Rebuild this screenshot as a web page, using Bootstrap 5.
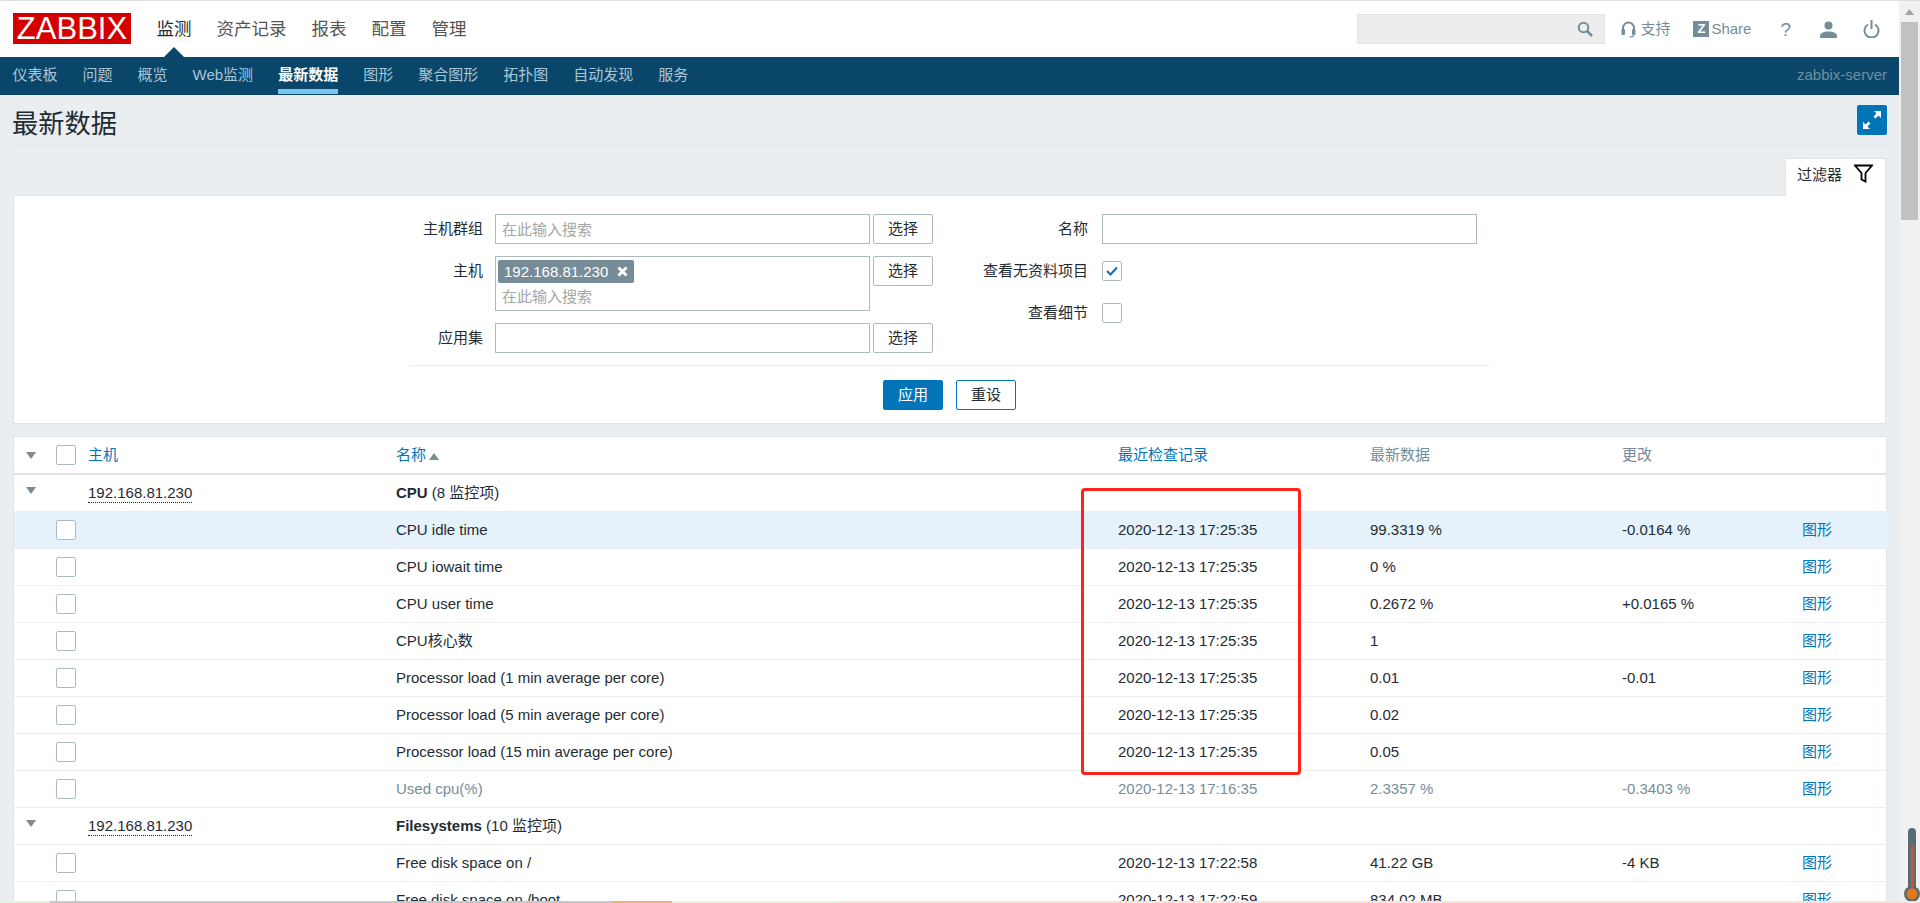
<!DOCTYPE html>
<html lang="zh-CN">
<head>
  <meta charset="UTF-8" />
  <title>最新数据</title>
  <link href="https://cdn.jsdelivr.net/npm/bootstrap@5.3.0/dist/css/bootstrap.min.css" rel="stylesheet"/>
  <style>
    html, body { height: 903px; overflow: hidden; }
    body { font-family: "Liberation Sans", "Noto Sans CJK SC", sans-serif; font-size: 15px; color: #1f2c33; background: #ebeef0; }
    a { text-decoration: none; }
    .zb-shell { height: 903px; overflow: hidden; border-top: 1px solid #dcdfe3; }
    .zb-main { width: 1899px; flex: none; overflow: hidden; background: #ebeef0; }
    .zb-scroll { width: 21px; flex: none; background: #f1f1f1; padding: 0 2px; }
    .zb-scroll-up { height: 21px; color: #a3a3a3; }
    .zb-scroll-thumb { height: 198px; background: #c1c1c1; }

    .zb-top { height: 56px; background: #fff; padding: 0 19px 0 13px; }
    .zb-logo { width: 118px; height: 31px; margin-top: -1px; background: #d40000; color: #fff; font-size: 31px; line-height: 31px; text-align: center; }
    .zb-menu { margin-left: 13px; }
    .zb-menu a { padding: 0 12.5px; font-size: 17.5px; color: #555; position: relative; line-height: 56px; display: block; }
    .zb-menu a.zb-on { color: #1f2c33; }
    .zb-menu a.zb-on::after { content: ""; position: absolute; left: 50%; bottom: 0; margin-left: -10px; border: solid transparent; border-width: 0 10px 10px; border-bottom-color: #0a466a; }
    .zb-search { width: 248px; height: 30px; background: #ededed; border: 1px solid #e3e3e3; margin-right: 16px; padding-right: 11px; }
    .zb-tool { color: #768d99; font-size: 15px; }
    .zb-tool svg { display: block; }
    .zb-zbox { width: 16px; height: 16px; background: #768d99; color: #fff; font-weight: 700; font-size: 13px; line-height: 16px; text-align: center; }

    .zb-sub { height: 38px; background: #0a466a; padding-right: 12px; }
    .zb-sub a { display: block; margin-left: 12.5px; margin-right: 12.5px; color: #a9c6d6; height: 38px; line-height: 36px; }
    .zb-sub a:first-child { margin-left: 12.5px; }
    .zb-sub a.zb-on { color: #fff; font-weight: 700; border-bottom: 5px solid #7cc4f0; margin-bottom: 0; height: 37px; }
    .zb-server { color: #6f8f9f; }

    .zb-head { height: 51px; margin: 0 12px 0 13px; border-bottom: 1px solid #dfe4e7; }
    .zb-title { font-size: 26.25px; line-height: 1; color: #1f2c33; margin: 0; font-weight: 400; padding-top: 8px; margin-left: -1px; }
    .zb-expand { width: 30px; height: 30px; background: #0275b8; border-radius: 2px; margin-top: 0; }

    .zb-tabwrap { margin: 12px 13px 0 13px; height: 37px; }
    .zb-tab { width: 101px; height: 38px; background: #fff; border: 1px solid #dfe4e7; border-bottom: 0; border-radius: 2px 2px 0 0; padding: 0 12px 0 11px; position: relative; z-index: 1; }
    .zb-tab span { margin-top: -5px; }
    .zb-filter { margin: 0 13px; height: 229px; background: #fff; border: 1px solid #dfe4e7; }
    .zb-form { width: 1079px; padding-top: 18px; }
    .zb-fields { padding-right: 12px; height: 152px; border-bottom: 1px solid #ebeef0; }
    .zb-lab { text-align: right; }
    .zb-grid-l { display: grid; grid-template-columns: 73px 375px 60px; column-gap: 12px; row-gap: 12px; align-items: start; align-content: start; }
    .zb-grid-l .zb-btn { margin-left: -9px; }
    .zb-grid-l .zb-lab { line-height: 30px; }
    .zb-grid-r { display: grid; grid-template-columns: 130px 375px; column-gap: 14px; row-gap: 12px; grid-auto-rows: 30px; align-items: center; align-content: start; }
    .zb-input.form-control { height: 30px; padding: 0 6px; border: 1px solid #acbbc2; border-radius: 0; font-size: 15px; color: #1f2c33; box-shadow: none; }
    .zb-input::placeholder { color: #a6a6a6; }
    .zb-multi { height: 55px; border: 1px solid #acbbc2; padding: 3px 2px; }
    .zb-chip { width: 136px; height: 23px; background: #768d99; color: #fff; border-radius: 2px; padding: 0 6px; line-height: 22px; }
    .zb-ph { color: #a6a6a6; padding-left: 4px; line-height: 24px; margin-top: 2px; }
    .zb-btn.btn { width: 60px; height: 30px; padding: 0; font-size: 15px; border: 1px solid #acbbc2; border-radius: 2px; background: #fff; color: #1f2c33; }
    .zb-act { padding-top: 14px; gap: 13px; }
    .zb-btn-apply.btn { background: #0275b8; border-color: #0275b8; color: #fff; margin: 0; }
    .zb-btn-reset.btn { border-color: #0275b8; color: #1f2c33; margin: 0; }
    .zb-cb { display: block; width: 20px; height: 20px; background: #fff; border: 1px solid #acbbc2; border-radius: 2px; }

    .zb-tablewrap { margin: 12px 12px 0 13px; background: #fff; border: solid #dfe4e7; border-width: 1px 1px 0; }
    .zb-table.table { table-layout: fixed; width: 1873px; margin: 0; --bs-table-color: #1f2c33; --bs-table-bg: transparent; font-size: 15px; }
    .zb-table th, .zb-table td { height: 37px; padding: 1px 8px 0; vertical-align: middle; border-bottom: 1px solid #ebeef0; font-weight: 400; white-space: nowrap; overflow: hidden; box-shadow: none; }
    .zb-table thead th { height: 37px; padding-top: 0; border-bottom: 2px solid #dfe4e7; color: #768d99; }
    .zb-table td .zb-cb { margin-top: -1px; }
    .zb-table th a, .zb-link { color: #0275b8; }
    .zb-host { border-bottom: 1px dotted #1f2c33; display: inline-block; line-height: 18px; }
    .zb-arrow { display: block; width: 0; height: 0; margin-left: 4px; border: solid transparent; border-width: 7px 5px 0; border-top-color: #768d99; }
    .zb-group .zb-arrow { margin-top: -5px; }
    .zb-sort { display: inline-block; width: 0; height: 0; margin-left: 3px; border: solid transparent; border-width: 0 5px 7px; border-bottom-color: #768d99; }
    .zb-hover td { background: #e5f2fb; }
    .zb-muted td { color: #768d99; }
    .zb-muted td a { color: #0275b8; }

    .zb-redbox { position: absolute; left: 1081px; top: 487px; width: 220px; height: 287px; border: 3px solid #fe2418; border-radius: 4px; pointer-events: none; }
    .zb-thermo { position: absolute; left: 1904px; top: 827px; }
    .zb-strip { position: absolute; left: 0; right: 0; bottom: 0; height: 2px; background: linear-gradient(90deg, #e3f3da 0 2.6%, #c8c8c8 2.6% 31.9%, #f2b06c 31.9% 35%, #e8f3e2 35% 43.7%, #f3e4dc 43.7% 100%); }
  </style>
</head>
<body>
<div class="zb-shell d-flex position-relative">
  <div class="zb-main">
    <!-- top menu -->
    <div class="zb-top d-flex align-items-center">
      <div class="zb-logo">ZABBIX</div>
      <nav class="zb-menu d-flex">
        <a class="zb-on" href="#">监测</a>
        <a href="#">资产记录</a>
        <a href="#">报表</a>
        <a href="#">配置</a>
        <a href="#">管理</a>
      </nav>
      <div class="ms-auto zb-search d-flex align-items-center justify-content-end">
        <svg width="16" height="16" viewBox="0 0 16 16" fill="none" stroke="#768d99"><circle cx="6.5" cy="6.5" r="4.8" stroke-width="2"/><path d="M10 10l5 5" stroke-width="2.6"/></svg>
      </div>
      <div class="zb-tool d-flex align-items-center" style="gap:4px">
        <svg width="15" height="17" viewBox="0 0 15 17" fill="none"><path d="M2 10V7a5.5 5.5 0 0 1 11 0v3" stroke="#768d99" stroke-width="2"/><rect x="0.5" y="8" width="3.5" height="6" rx="1.2" fill="#768d99"/><rect x="11" y="8" width="3.5" height="6" rx="1.2" fill="#768d99"/><path d="M12.5 14c0 1.5-2 2-4 2" stroke="#768d99" stroke-width="1.2"/></svg>
        <span>支持</span>
      </div>
      <div class="zb-tool d-flex align-items-center" style="gap:2px;margin-left:23px">
        <span class="zb-zbox">Z</span><span>Share</span>
      </div>
      <div class="zb-tool" style="margin-left:29px;font-size:19px;line-height:1">?</div>
      <div class="zb-tool" style="margin-left:29px">
        <svg width="17" height="17" viewBox="0 0 17 17" fill="#768d99"><circle cx="8.5" cy="4.5" r="4"/><path d="M0 17v-2c0-3 3.500-4.500 8.500-4.500S17 12 17 15v2z"/></svg>
      </div>
      <div class="zb-tool" style="margin-left:26px">
        <svg width="17" height="18" viewBox="0 0 17 18" fill="none" stroke="#768d99" stroke-width="2"><path d="M5 4.500a7 7 0 1 0 7 0"/><path d="M8.500 0v9"/></svg>
      </div>
    </div>

    <!-- sub menu -->
    <div class="zb-sub d-flex">
      <a href="#">仪表板</a>
      <a href="#">问题</a>
      <a href="#">概览</a>
      <a href="#">Web监测</a>
      <a class="zb-on" href="#">最新数据</a>
      <a href="#">图形</a>
      <a href="#">聚合图形</a>
      <a href="#">拓扑图</a>
      <a href="#">自动发现</a>
      <a href="#">服务</a>
      <span class="zb-server ms-auto" style="line-height:36px">zabbix-server</span>
    </div>

    <!-- page title -->
    <div class="zb-head d-flex justify-content-between align-items-center">
      <h1 class="zb-title">最新数据</h1>
      <div class="zb-expand d-flex align-items-center justify-content-center">
        <svg width="20" height="20" viewBox="0 0 20 20" fill="#fff"><path d="M12 1h7v7l-2.500-2.500-3 3-2-2 3-3zM8 19H1v-7l2.500 2.500 3-3 2 2-3 3z"/></svg>
      </div>
    </div>

    <!-- filter -->
    <div class="zb-tabwrap d-flex justify-content-end">
      <div class="zb-tab d-flex justify-content-between align-items-center">
        <span>过滤器</span>
        <svg width="19" height="19" viewBox="0 0 19 19" fill="none" stroke="#000" stroke-width="1.800" style="margin-top:-9px"><path d="M1 1.500h17l-6.500 7.500v8.500l-4-2V9z"/></svg>
      </div>
    </div>
    <div class="zb-filter">
      <div class="zb-form mx-auto">
        <div class="zb-fields d-flex justify-content-between">
          <div class="zb-grid-l">
            <div class="zb-lab">主机群组</div>
            <input class="form-control zb-input" placeholder="在此输入搜索">
            <button type="button" class="btn zb-btn">选择</button>
            <div class="zb-lab">主机</div>
            <div class="zb-multi">
              <div class="zb-chip d-flex justify-content-between align-items-center">
                <span>192.168.81.230</span>
                <svg width="11" height="11" viewBox="0 0 11 11" stroke="#fff" stroke-width="3"><path d="M1.500 1.500l8 8M9.500 1.500l-8 8"/></svg>
              </div>
              <div class="zb-ph">在此输入搜索</div>
            </div>
            <button type="button" class="btn zb-btn">选择</button>
            <div class="zb-lab">应用集</div>
            <input class="form-control zb-input">
            <button type="button" class="btn zb-btn">选择</button>
          </div>
          <div class="zb-grid-r">
            <div class="zb-lab">名称</div>
            <input class="form-control zb-input">
            <div class="zb-lab">查看无资料项目</div>
            <span class="zb-cb">
              <svg class="d-block" width="18" height="18" viewBox="0 0 18 18" fill="none" stroke="#0275b8" stroke-width="2"><path d="M4 9l3.500 3.500L14 5.500"/></svg>
            </span>
            <div class="zb-lab">查看细节</div>
            <span class="zb-cb"></span>
          </div>
        </div>
        <div class="zb-act d-flex justify-content-center">
          <button type="button" class="btn zb-btn zb-btn-apply">应用</button>
          <button type="button" class="btn zb-btn zb-btn-reset">重设</button>
        </div>
      </div>
    </div>

    <!-- latest data table -->
    <div class="zb-tablewrap">
      <table class="table zb-table">
        <colgroup>
          <col style="width:34px"><col style="width:32px"><col style="width:308px"><col style="width:722px"><col style="width:252px"><col style="width:252px"><col style="width:180px"><col style="width:93px">
        </colgroup>
        <thead>
          <tr>
            <th><span class="zb-arrow"></span></th>
            <th><span class="zb-cb"></span></th>
            <th><a href="#">主机</a></th>
            <th><a href="#">名称</a><span class="zb-sort"></span></th>
            <th><a href="#">最近检查记录</a></th>
            <th>最新数据</th>
            <th>更改</th>
            <th></th>
          </tr>
        </thead>
        <tbody>
          <tr class="zb-group">
            <td><span class="zb-arrow"></span></td><td></td>
            <td><span class="zb-host">192.168.81.230</span></td>
            <td><b>CPU</b> (8 监控项)</td><td></td><td></td><td></td><td></td>
          </tr>
          <tr class="zb-hover">
            <td></td><td><span class="zb-cb"></span></td><td></td>
            <td>CPU idle time</td><td>2020-12-13 17:25:35</td><td>99.3319 %</td><td>-0.0164 %</td><td><a class="zb-link" href="#">图形</a></td>
          </tr>
          <tr>
            <td></td><td><span class="zb-cb"></span></td><td></td>
            <td>CPU iowait time</td><td>2020-12-13 17:25:35</td><td>0 %</td><td></td><td><a class="zb-link" href="#">图形</a></td>
          </tr>
          <tr>
            <td></td><td><span class="zb-cb"></span></td><td></td>
            <td>CPU user time</td><td>2020-12-13 17:25:35</td><td>0.2672 %</td><td>+0.0165 %</td><td><a class="zb-link" href="#">图形</a></td>
          </tr>
          <tr>
            <td></td><td><span class="zb-cb"></span></td><td></td>
            <td>CPU核心数</td><td>2020-12-13 17:25:35</td><td>1</td><td></td><td><a class="zb-link" href="#">图形</a></td>
          </tr>
          <tr>
            <td></td><td><span class="zb-cb"></span></td><td></td>
            <td>Processor load (1 min average per core)</td><td>2020-12-13 17:25:35</td><td>0.01</td><td>-0.01</td><td><a class="zb-link" href="#">图形</a></td>
          </tr>
          <tr>
            <td></td><td><span class="zb-cb"></span></td><td></td>
            <td>Processor load (5 min average per core)</td><td>2020-12-13 17:25:35</td><td>0.02</td><td></td><td><a class="zb-link" href="#">图形</a></td>
          </tr>
          <tr>
            <td></td><td><span class="zb-cb"></span></td><td></td>
            <td>Processor load (15 min average per core)</td><td>2020-12-13 17:25:35</td><td>0.05</td><td></td><td><a class="zb-link" href="#">图形</a></td>
          </tr>
          <tr class="zb-muted">
            <td></td><td><span class="zb-cb"></span></td><td></td>
            <td>Used cpu(%)</td><td>2020-12-13 17:16:35</td><td>2.3357 %</td><td>-0.3403 %</td><td><a href="#">图形</a></td>
          </tr>
          <tr class="zb-group">
            <td><span class="zb-arrow"></span></td><td></td>
            <td><span class="zb-host">192.168.81.230</span></td>
            <td><b>Filesystems</b> (10 监控项)</td><td></td><td></td><td></td><td></td>
          </tr>
          <tr>
            <td></td><td><span class="zb-cb"></span></td><td></td>
            <td>Free disk space on /</td><td>2020-12-13 17:22:58</td><td>41.22 GB</td><td>-4 KB</td><td><a class="zb-link" href="#">图形</a></td>
          </tr>
          <tr>
            <td></td><td><span class="zb-cb"></span></td><td></td>
            <td>Free disk space on /boot</td><td>2020-12-13 17:22:59</td><td>834.02 MB</td><td></td><td><a class="zb-link" href="#">图形</a></td>
          </tr>
        </tbody>
      </table>
    </div>
  </div>

  <!-- page scrollbar -->
  <div class="zb-scroll">
    <div class="zb-scroll-up d-flex align-items-center justify-content-center">
      <svg width="9" height="6" viewBox="0 0 9 6" fill="#a3a3a3"><path d="M4.500 0L9 6H0z"/></svg>
    </div>
    <div class="zb-scroll-thumb"></div>
  </div>

  <div class="zb-redbox"></div>
  <svg class="zb-thermo" width="16" height="76" viewBox="0 0 16 76">
    <rect x="4" y="0" width="8" height="62" rx="4" fill="#5a6b75"/>
    <circle cx="8" cy="66" r="8" fill="#5a6b75"/>
    <rect x="7" y="18" width="2.500" height="44" fill="#d8542a"/>
    <circle cx="8" cy="66" r="5.500" fill="#e2791c"/>
  </svg>
  <div class="zb-strip"></div>
</div>
</body>
</html>
